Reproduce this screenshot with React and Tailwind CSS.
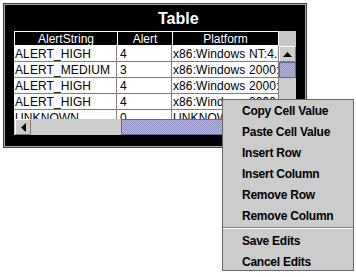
import React from "react";

const rows = [
  ["ALERT_HIGH", "4", "x86:Windows NT:4.0"],
  ["ALERT_MEDIUM", "3", "x86:Windows 2000:5.0"],
  ["ALERT_HIGH", "4", "x86:Windows 2000:5.0"],
  ["ALERT_HIGH", "4", "x86:Windows 2000:5.0"],
  ["UNKNOWN", "0", "UNKNOWN"],
];

const font = { fontFamily: '"Liberation Sans", Arial, sans-serif' };

function Up() {
  return (
    <svg width="9" height="5" viewBox="0 0 9 5">
      <path d="M0 5 L4.5 0 L9 5 Z" fill="#000" />
    </svg>
  );
}
function Left() {
  return (
    <svg width="5" height="9" viewBox="0 0 5 9">
      <path d="M5 0 L0 4.5 L5 9 Z" fill="#000" />
    </svg>
  );
}

const thumb =
  "bg-[#9c9cce] bg-[repeating-conic-gradient(#b4b4de_0_25%,#9494c8_0_50%)] bg-[length:2px_2px] border border-[#66669a]";

export default function App() {
  return (
    <div className="relative w-[356px] h-[277px] bg-white overflow-hidden" style={font}>
      <div className="ml-[3px] mt-[3px] w-[304px] h-[145px] border border-[#404040]">
        <div className="w-full h-full border border-[#a8a8a8] bg-black flex flex-col">
          <div className="h-[26px] flex items-center pl-[153px] text-white font-bold text-[16px] leading-none pt-[2px]">
            Table
          </div>
          <div className="ml-[9px] w-[282px] h-[104px] flex flex-col">
            <div className="flex h-[88px]">
              <div className="w-[265px] flex flex-col overflow-hidden">
                <div className="flex h-[15px] shrink-0 border-t border-l border-white text-white text-[12px] leading-[14px]">
                  <div className="w-[103px] border-r border-b border-white flex items-center justify-center pt-[1px]">AlertString</div>
                  <div className="w-[55px] border-r border-b border-white flex items-center justify-center pt-[1px]">Alert</div>
                  <div className="w-[106px] border-r border-b border-white flex items-center justify-center pt-[1px]">Platform</div>
                </div>
                {rows.map((r, i) => (
                  <div key={i} className="flex h-[16px] shrink-0 bg-white text-black text-[12px] leading-[14px] tracking-[0.1px]">
                    <div className="w-[103px] border-r border-b border-[#808080] flex items-center pl-[1px] pt-[1px] overflow-hidden whitespace-nowrap">{r[0]}</div>
                    <div className="w-[55px] border-r border-b border-[#808080] flex items-center pl-[3px] pt-[1px] overflow-hidden whitespace-nowrap">{r[1]}</div>
                    <div className="w-[107px] border-r border-b border-[#808080] flex items-center pl-[1px] pt-[1px] overflow-hidden whitespace-nowrap">{r[2]}</div>
                  </div>
                ))}
              </div>
              <div className="w-[17px] flex flex-col bg-[#cccccc]">
                <div className="h-[15px] bg-[#c8c8c8]" />
                <div className="h-[16px] border border-t-white border-l-white border-r-[#808080] border-b-[#808080] flex items-center justify-center">
                  <Up />
                </div>
                <div className={"h-[16px] " + thumb} />
                <div className="flex-1 bg-[#cccccc]" />
              </div>
            </div>
            <div className="flex h-[16px] w-[265px] bg-[#cccccc]">
              <div className="ml-[1px] w-[16px] border border-t-white border-l-white border-r-[#808080] border-b-[#808080] flex items-center justify-center">
                <Left />
              </div>
              <div className="w-[90px]" />
              <div className={"flex-1 " + thumb} />
            </div>
          </div>
        </div>
      </div>

      <div className="absolute left-[222px] top-[99px] w-[132px] h-[172px] bg-[#cccccc] border border-[#666666] flex flex-col text-black font-bold text-[12px] tracking-[-0.25px] leading-none">
        {["Copy Cell Value", "Paste Cell Value", "Insert Row", "Insert Column", "Remove Row", "Remove Column"].map((t) => (
          <div key={t} className="h-[21px] flex items-center pl-[19px] shrink-0">{t}</div>
        ))}
        <div className="h-[2px] my-[1px] border-t border-[#808080] border-b border-b-white shrink-0" />
        {["Save Edits", "Cancel Edits"].map((t) => (
          <div key={t} className="h-[21px] flex items-center pl-[19px] shrink-0">{t}</div>
        ))}
      </div>
    </div>
  );
}
